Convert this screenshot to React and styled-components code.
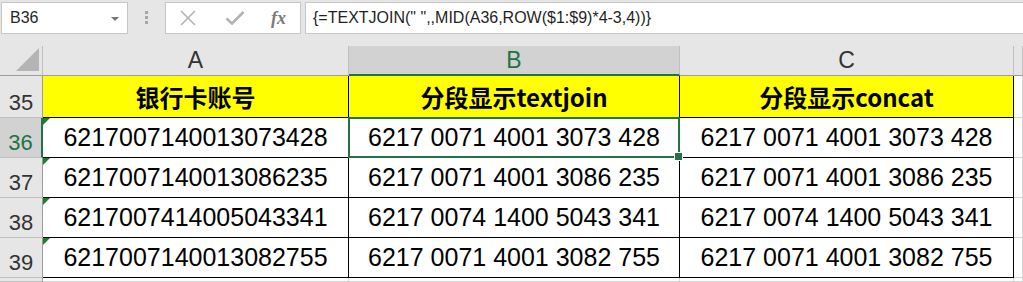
import { Fragment } from "react";
import styled, { createGlobalStyle, css } from "styled-components";

const GlobalStyle = createGlobalStyle`
  html, body {
    margin: 0;
    padding: 0;
    background: #e6e6e6;
    overflow: hidden;
  }
  * {
    box-sizing: border-box;
  }
`;

const Page = styled.div`
  width: 1023px;
  height: 282px;
  overflow: hidden;
  font-family: "Liberation Sans", Arial, sans-serif;
`;

const Toolbar = styled.div`
  display: flex;
  align-items: flex-start;
  height: 46px;
  padding: 2px 0 0 1px;
  background: #e6e6e6;
`;

const NameBox = styled.div`
  position: relative;
  display: flex;
  align-items: center;
  width: 127px;
  height: 32px;
  padding-left: 8px;
  background: #fff;
  border: 1px solid #c6c6c6;
  font-size: 16px;
  color: #262626;
`;

const Caret = styled.span`
  position: absolute;
  right: 8px;
  top: 14px;
  width: 0;
  height: 0;
  border-left: 4px solid transparent;
  border-right: 4px solid transparent;
  border-top: 4px solid #777;
`;

const Grip = styled.div`
  display: flex;
  flex-direction: column;
  align-items: center;
  gap: 2px;
  width: 37px;
  padding-top: 9px;

  span {
    width: 3px;
    height: 3px;
    background: #a6a6a6;
  }
`;

const FxBox = styled.div`
  display: flex;
  align-items: center;
  width: 136px;
  height: 32px;
  padding-left: 13px;
  gap: 28px;
  background: #fff;
  border: 1px solid #c6c6c6;
`;

const Fx = styled.span`
  font-family: "Liberation Serif", "Times New Roman", serif;
  font-style: italic;
  font-weight: bold;
  font-size: 18px;
  color: #7a7a7a;
  margin-left: -2px;
`;

const FormulaBox = styled.div`
  flex: 1;
  display: flex;
  align-items: center;
  height: 32px;
  margin-left: 4px;
  padding-left: 7px;
  background: #fff;
  border: 1px solid #c6c6c6;
  border-right: none;
  font-size: 16px;
  color: #1f1f1f;
`;

const Sheet = styled.div`
  display: grid;
  grid-template-columns: 43px 306px 331px 334px 1fr;
  grid-template-rows: 30px 42px 40px 40px 40px 40px 1fr;
  height: 236px;
  background: #fff;
`;

const Corner = styled.div`
  position: relative;
  background: #e6e6e6;
  border-right: 1px solid #bfbfbf;
  border-bottom: 1px solid #9b9b9b;

  &::after {
    content: "";
    position: absolute;
    right: 3px;
    bottom: 4px;
    width: 0;
    height: 0;
    border-left: 23px solid transparent;
    border-bottom: 23px solid #b4b4b4;
  }
`;

const ColHead = styled.div`
  display: flex;
  align-items: center;
  justify-content: center;
  background: #e6e6e6;
  border-right: 1px solid #bfbfbf;
  border-bottom: 1px solid #9b9b9b;
  font-size: 23px;
  color: #333;
  ${(p) =>
    p.$active &&
    css`
      background: #d2d2d2;
      color: #217346;
      border-bottom: 2px solid #217346;
    `}
`;

const RowHead = styled.div`
  display: flex;
  align-items: flex-end;
  justify-content: center;
  padding-bottom: 3px;
  background: #e6e6e6;
  border-right: 1px solid #9b9b9b;
  border-bottom: 1px solid #bfbfbf;
  font-size: 22px;
  line-height: 1;
  color: #333;
  ${(p) =>
    p.$active &&
    css`
      background: #d2d2d2;
      color: #217346;
      border-right: 2px solid #217346;
    `}
`;

const Cell = styled.div`
  position: relative;
  display: flex;
  align-items: center;
  justify-content: center;
  border-right: 1px solid #000;
  border-bottom: 1px solid #000;
  font-size: 25px;
  color: #000;
  white-space: nowrap;

  ${(p) =>
    p.$head &&
    css`
      background: #ff0;
      font-family: "Noto Sans CJK SC", "Liberation Sans", sans-serif;
      font-weight: bold;
      font-size: 24px;
    `}

  ${(p) =>
    p.$flag &&
    css`
      &::before {
        content: "";
        position: absolute;
        left: 0;
        top: 0;
        width: 0;
        height: 0;
        border-top: 7px solid #1a7f2a;
        border-right: 7px solid transparent;
      }
    `}

  ${(p) =>
    p.$selected &&
    css`
      &::after {
        content: "";
        position: absolute;
        inset: -1px;
        border: 2px solid #217346;
        z-index: 2;
      }
      &::before {
        content: "";
        position: absolute;
        right: -4px;
        bottom: -4px;
        width: 7px;
        height: 7px;
        background: #217346;
        border: 1px solid #fff;
        z-index: 3;
      }
    `}
`;

const EmptyCell = styled.div`
  background: #fff;
  border-right: 1px solid #d4d4d4;
  border-bottom: 1px solid #d4d4d4;
`;

const XIcon = () => (
  <svg width="18" height="18" viewBox="0 0 18 18">
    <path d="M2 2 L16 16 M16 2 L2 16" stroke="#b3b3b3" strokeWidth="1.6" fill="none" />
  </svg>
);

const CheckIcon = () => (
  <svg width="20" height="16" viewBox="0 0 20 16">
    <path d="M1.5 8.5 L7 13.5 L18.5 2" stroke="#b3b3b3" strokeWidth="2.6" fill="none" />
  </svg>
);

const rows = [
  ["6217007140013073428", "6217 0071 4001 3073 428", "6217 0071 4001 3073 428"],
  ["6217007140013086235", "6217 0071 4001 3086 235", "6217 0071 4001 3086 235"],
  ["6217007414005043341", "6217 0074 1400 5043 341", "6217 0074 1400 5043 341"],
  ["6217007140013082755", "6217 0071 4001 3082 755", "6217 0071 4001 3082 755"],
];

export default function App() {
  return (
    <Page>
      <GlobalStyle />
      <Toolbar>
        <NameBox>
          B36
          <Caret />
        </NameBox>
        <Grip>
          <span />
          <span />
          <span />
        </Grip>
        <FxBox>
          <XIcon />
          <CheckIcon />
          <Fx>fx</Fx>
        </FxBox>
        <FormulaBox>{'{=TEXTJOIN(" ",,MID(A36,ROW($1:$9)*4-3,4))}'}</FormulaBox>
      </Toolbar>

      <Sheet>
        <Corner />
        <ColHead>A</ColHead>
        <ColHead $active>B</ColHead>
        <ColHead>C</ColHead>
        <ColHead />

        <RowHead>35</RowHead>
        <Cell $head>银行卡账号</Cell>
        <Cell $head>分段显示textjoin</Cell>
        <Cell $head>分段显示concat</Cell>
        <EmptyCell />

        {rows.map((r, i) => (
          <Fragment key={i}>
            <RowHead $active={i === 0}>{36 + i}</RowHead>
            <Cell $flag>{r[0]}</Cell>
            <Cell $selected={i === 0}>{r[1]}</Cell>
            <Cell>{r[2]}</Cell>
            <EmptyCell />
          </Fragment>
        ))}

        <RowHead />
        <EmptyCell />
        <EmptyCell />
        <EmptyCell />
        <EmptyCell />
      </Sheet>
    </Page>
  );
}
